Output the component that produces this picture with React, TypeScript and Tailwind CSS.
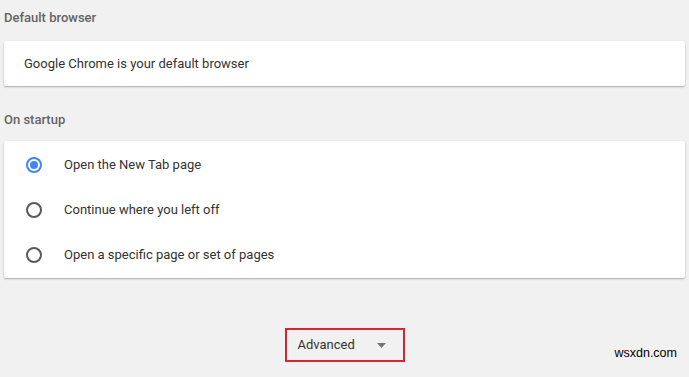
import React from "react";

const options = [
  "Open the New Tab page",
  "Continue where you left off",
  "Open a specific page or set of pages",
];

function Radio({ checked }: { checked: boolean }) {
  return (
    <span
      className={`flex h-4 w-4 items-center justify-center rounded-full border-2 ${
        checked ? "border-[#4285f4]" : "border-[#5a5a5a]"
      }`}
    >
      {checked && <span className="h-2 w-2 rounded-full bg-[#4285f4]" />}
    </span>
  );
}

export default function App() {
  return (
    <div className="h-[377px] w-[689px] overflow-hidden bg-[#f1f1f1] font-['Roboto',sans-serif] text-[13px]">
      <div className="px-[4px] pt-[9px]">
        {/* Default browser */}
        <div className="h-[18px] leading-[18px] font-medium text-[#646464]">Default browser</div>
        <div className="mt-[14px] flex h-[45px] items-center rounded-[2px] bg-white pl-[20px] text-[#333] shadow-[0_1px_2px_rgba(0,0,0,0.3)]">
          Google Chrome is your default browser
        </div>

        {/* On startup */}
        <div className="mt-[25px] h-[18px] leading-[18px] font-medium text-[#646464]">On startup</div>
        <div className="mt-[12px] flex flex-col rounded-[2px] bg-white py-[1px] shadow-[0_1px_2px_rgba(0,0,0,0.3)]">
          {options.map((label, i) => (
            <div key={label} className="flex h-[45px] items-center pl-[22px] text-[#333]">
              <Radio checked={i === 0} />
              <span className="ml-[22px]">{label}</span>
            </div>
          ))}
        </div>

        {/* Advanced */}
        <div className="mt-[50px] flex justify-center">
          <div className="flex h-[34px] w-[120px] items-center border-2 border-[#d9232e] pl-[11px] text-[#333]">
            <span>Advanced</span>
            <svg className="ml-[22px]" width="9" height="5" viewBox="0 0 9 5">
              <path d="M0 0h9L4.5 5z" fill="#757575" />
            </svg>
          </div>
        </div>
      </div>
      <div className="-mt-[17px] pr-[12px] text-right font-['Liberation_Sans',sans-serif] text-[12.5px] leading-[16px] text-black">
        wsxdn.com
      </div>
    </div>
  );
}
